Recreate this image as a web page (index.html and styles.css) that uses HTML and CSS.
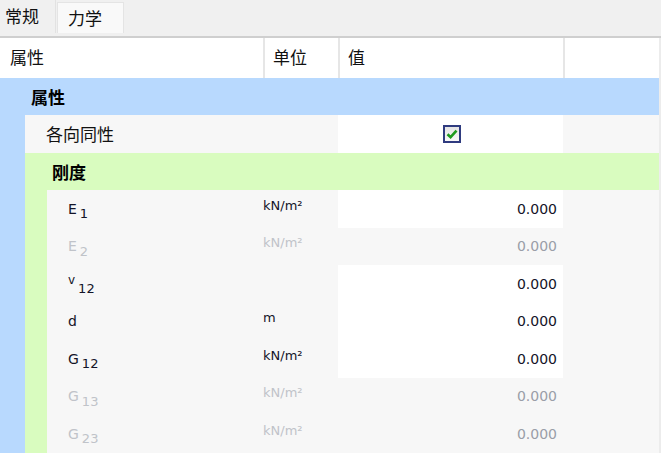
FILE: index.html
```html
<!DOCTYPE html>
<html>
<head>
<meta charset="utf-8">
<link rel="stylesheet" href="styles.css">
</head>
<body>
<div class="tabbar">
  <div class="tab">常规</div>
  <div class="tab active">力学</div>
</div>
<div class="sep"></div>
<div class="grid">
  <div class="hdr">
    <div class="hc c1">属性</div>
    <div class="hc c2">单位</div>
    <div class="hc c3">值</div>
    <div class="hc c4"></div>
  </div>
  <div class="group blue"><span class="gtitle t1">属性</span></div>
  <div class="nest blue">
    <div class="stripe s1"></div>
    <div class="col">
      <div class="row">
        <div class="lab l1 cjk">各向同性</div>
        <div class="unit"></div>
        <div class="val white center"><span class="check"><svg width="14" height="14" viewBox="0 0 14 14"><path d="M2.5 7.2 L5.6 10.2 L11.5 3.6" fill="none" stroke="#1e9a1e" stroke-width="2.6" stroke-linejoin="miter"/></svg></span></div>
        <div class="rest"></div>
      </div>
      <div class="group green"><span class="gtitle t2">刚度</span></div>
      <div class="nest green">
        <div class="stripe s2"></div>
        <div class="col">
          <div class="row"><div class="lab l2">E<sub>1</sub></div><div class="unit">kN/m²</div><div class="val white">0.000</div><div class="rest"></div></div>
          <div class="row dis"><div class="lab l2">E<sub>2</sub></div><div class="unit">kN/m²</div><div class="val">0.000</div><div class="rest"></div></div>
          <div class="row"><div class="lab l2"><span class="nu">v</span><sub>12</sub></div><div class="unit"></div><div class="val white">0.000</div><div class="rest"></div></div>
          <div class="row"><div class="lab l2">d</div><div class="unit">m</div><div class="val white">0.000</div><div class="rest"></div></div>
          <div class="row"><div class="lab l2">G<sub>12</sub></div><div class="unit">kN/m²</div><div class="val white">0.000</div><div class="rest"></div></div>
          <div class="row dis"><div class="lab l2">G<sub>13</sub></div><div class="unit">kN/m²</div><div class="val">0.000</div><div class="rest"></div></div>
          <div class="row dis"><div class="lab l2">G<sub>23</sub></div><div class="unit">kN/m²</div><div class="val">0.000</div><div class="rest"></div></div>
        </div>
      </div>
    </div>
  </div>
</div>
</body>
</html>
```
FILE: styles.css
```css
html, body {
  margin: 0;
  padding: 0;
  background: #ffffff;
  overflow: hidden;
}
body {
  font-family: "DejaVu Sans", "Noto Sans CJK SC", sans-serif;
  font-size: 14px;
  color: #141428;
  width: 661px;
  height: 454px;
}
.tabbar {
  display: flex;
  height: 33px;
  background: #f0f0f0;
  align-items: flex-end;
}
.tab {
  font-family: "Noto Sans CJK SC", sans-serif;
  font-size: 17px;
  color: #111;
  height: 33px;
  width: 56px;
  line-height: 32px;
  padding-left: 5px;
  box-sizing: border-box;
  border-right: 1px solid #e2e2e2;
}
.tab.active {
  background: #f9f9f9;
  border: 1px solid #e4e4e4;
  border-bottom: none;
  height: 31px;
  width: 67px;
  margin-left: 1px;
  padding-left: 10px;
  line-height: 29px;
}
.sep {
  height: 3px;
  background: #f0f0f0;
  border-bottom: 2px solid #cfcfcf;
}
.grid {
  width: 659px;
  border-right: 2px solid #ececec;
}
.hdr {
  display: flex;
  height: 39.5px;
  background: #fff;
}
.hc {
  font-family: "Noto Sans CJK SC", sans-serif;
  font-size: 17px;
  color: #111;
  line-height: 38px;
  box-sizing: border-box;
  border-right: 2px solid #e6e6e6;
  padding-left: 8px;
}
.hc.c1 { width: 265px; padding-left: 10px; }
.hc.c2 { width: 75px; }
.hc.c3 { width: 225px; }
.hc.c4 { flex: 1; border-right: none; }
.group {
  height: 37.5px;
  display: flex;
  align-items: center;
}
.blue { background: #b8d9fe; }
.green { background: #d9fcbf; }
.gtitle {
  font-family: "Noto Sans CJK SC", sans-serif;
  font-weight: 700;
  font-size: 17px;
  color: #000;
}
.t1 { padding-left: 31px; }
.t2 { padding-left: 27px; }
.nest { display: flex; }
.stripe { flex: none; }
.s1 { width: 25px; }
.s2 { width: 22px; }
.col { flex: 1; display: flex; flex-direction: column; }
.row {
  display: flex;
  height: 37.5px;
  background: #f7f7f7;
  align-items: stretch;
}
.lab, .unit, .val, .rest {
  display: flex;
  align-items: center;
}
.lab.l1 { width: 238px; padding-left: 21px; box-sizing: border-box; font-family: "Noto Sans CJK SC", sans-serif; font-size: 17px; color: #111; }
.lab.l2 { width: 216px; padding-left: 21px; box-sizing: border-box; }
.lab sub {
  font-size: 13px;
  position: relative;
  top: 5px;
  vertical-align: baseline;
  margin-left: 3px;
}
.nu { position: relative; top: -4px; font-size: 12px; }
.unit {
  width: 75px;
  font-size: 13px;
  padding-bottom: 7px;
  box-sizing: border-box;
}
.val {
  width: 225px;
  justify-content: flex-end;
  padding-right: 6px;
  box-sizing: border-box;
}
.val.center { justify-content: flex-start; padding-left: 105px; }
.white { background: #ffffff; }
.rest { flex: 1; }
.dis { color: #c0c3c9; }
.dis .val { color: #9a9ea8; }
.check {
  width: 18px;
  height: 18px;
  box-sizing: border-box;
  border: 2px solid #2f3b7f;
  background: linear-gradient(#e4e4e4, #f8f8f8);
  display: flex;
  align-items: center;
  justify-content: center;
}
```
